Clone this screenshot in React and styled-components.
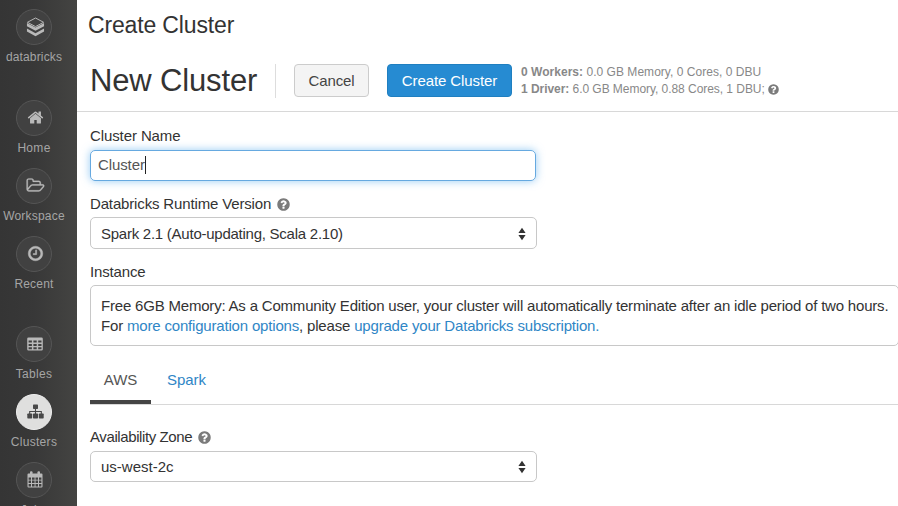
import React from "react";
import styled, { createGlobalStyle } from "styled-components";

const GlobalStyle = createGlobalStyle`
  * { box-sizing: border-box; }
  body { margin: 0; overflow: hidden; background: #fff; }
`;

const Page = styled.div`
  display: flex;
  width: 898px;
  height: 506px;
  overflow: hidden;
  background: #fff;
  color: #333;
  font: 15px/20px "Liberation Sans", Arial, sans-serif;
`;

const Sidebar = styled.nav`
  display: flex;
  flex-direction: column;
  flex: 0 0 77px;
  height: 506px;
  padding-top: 9px;
  overflow: hidden;
  background: linear-gradient(90deg, #353535 0%, #383838 45%, #444442 100%);
`;

const NavItem = styled.a`
  display: flex;
  flex-direction: column;
  flex: 0 0 68px;
  align-items: center;
  width: 68px;
  margin-top: ${(p) => p.$gap || 0}px;
  color: #a5a5a5;
`;

const NavCircle = styled.span`
  display: grid;
  place-items: center;
  width: 36px;
  height: 36px;
  padding: 0 0 1px 2px;
  border: 1px solid ${(p) => (p.$active ? "#eee" : "#555")};
  border-radius: 50%;
  background: ${(p) => (p.$active ? "#dfdfde" : "#414141")};
  color: ${(p) => (p.$active ? "#484848" : "#b9b9b9")};
`;

const NavLabel = styled.span`
  margin-top: 3px;
  font-size: 12px;
  line-height: 18px;
  letter-spacing: ${(p) => p.$track}px;
  white-space: nowrap;
`;

const Icon = styled.svg`
  display: block;
  flex: none;
  fill: currentColor;
`;

const Main = styled.main`
  flex: 1;
  min-width: 0;
`;

const PageTitle = styled.div`
  height: 50px;
  padding: 10px 0 0 11px;
  font-size: 23px;
  line-height: 30px;
  letter-spacing: -0.15px;
`;

const Toolbar = styled.header`
  display: flex;
  align-items: center;
  height: 62px;
  padding-left: 13px;
  border-bottom: 1px solid #d8d8d8;
`;

const Heading = styled.h1`
  width: 186px;
  height: 34px;
  margin: 0 18px 0 0;
  border-right: 1px solid #ddd;
  font-size: 31px;
  font-weight: 400;
  line-height: 34px;
  letter-spacing: -0.15px;
  white-space: nowrap;
`;

const Button = styled.button`
  width: ${(p) => p.$width}px;
  height: 33px;
  margin-right: 18px;
  padding: 0;
  border: 1px solid ${(p) => (p.$primary ? "#1f7fc0" : "#ccc")};
  border-radius: 4px;
  background: ${(p) => (p.$primary ? "#268bd2" : "#f4f4f4")};
  color: ${(p) => (p.$primary ? "#fff" : "#444")};
  font: 15px/31px "Liberation Sans", Arial, sans-serif;
  letter-spacing: -0.1px;
`;

const Summary = styled.div`
  margin-left: -9px;
  color: #888;
  font-size: 12px;
  line-height: 17px;
  white-space: nowrap;
`;

const SummaryRow = styled.div`
  display: flex;
  align-items: center;
  gap: 3px;
  letter-spacing: ${(p) => p.$track || 0}px;
`;

const Form = styled.form`
  padding: 14px 0 0 13px;
`;

const Label = styled.label`
  display: flex;
  align-items: center;
  gap: 6px;
  height: 20px;
  margin-top: ${(p) => p.$gap || 0}px;
  letter-spacing: ${(p) => p.$track || 0}px;
`;

const HelpIcon = styled(Icon)`
  color: #7b7b7b;
`;

const TextField = styled.div`
  display: flex;
  align-items: center;
  width: 446px;
  height: 31px;
  margin-top: 4px;
  padding: 0 7px 2px;
  border: 1px solid #66a9e0;
  border-radius: 5px;
  box-shadow: 0 0 8px rgba(82, 168, 236, 0.6);
  color: #555;
  letter-spacing: -0.1px;
`;

const Caret = styled.span`
  width: 1px;
  height: 18px;
  background: #222;
`;

const SelectBox = styled.div`
  display: flex;
  align-items: center;
  justify-content: space-between;
  width: 447px;
  height: ${(p) => p.$height || 32}px;
  margin-top: ${(p) => p.$gap || 3}px;
  padding: ${(p) => p.$drop || 0}px 10px 0;
  border: 1px solid #c8c8c8;
  border-radius: 5px;
  letter-spacing: ${(p) => p.$track || 0}px;
`;

const Notice = styled.div`
  width: 809px;
  height: 61px;
  margin-top: 3px;
  padding: 10px;
  border: 1px solid #c8c8c8;
  border-radius: 5px;
`;

const NoticeLine = styled.div`
  letter-spacing: ${(p) => p.$track || 0}px;
  white-space: nowrap;
`;

const Link = styled.a`
  color: #2f86c6;
`;

const Tabs = styled.div`
  display: flex;
  height: 59px;
  border-bottom: 1px solid #d8d8d8;
`;

const Tab = styled.div`
  width: ${(p) => p.$width}px;
  height: 58px;
  padding-top: 24px;
  border-bottom: ${(p) => (p.$active ? "4px solid #444" : "0")};
  color: ${(p) => (p.$active ? "#555" : "#2f86c6")};
  text-align: center;
`;

const BricksIcon = () => (
  <Icon width="19" height="20" viewBox="0 0 20 20" preserveAspectRatio="none">
    <path d="M1.500 5.300L10 1l8.500 4.300L10 9.600z" fill="none" stroke="currentColor" strokeWidth="1" />
    <path d="M1 6v3.200l9 4.500 9-4.500V6l-9 4.600zM1 11.600v3l9 4.600 9-4.600v-3l-9 4.600z" />
  </Icon>
);

const HomeIcon = () => (
  <Icon width="17" height="17" viewBox="0 0 1792 1792">
    <path d="M1472 992v480q0 26-19 45t-45 19h-384v-384h-256v384h-384q-26 0-45-19t-19-45v-480q0-1 .5-3t.5-3l575-474 575 474q1 2 1 6zm223-69l-62 74q-8 9-21 11h-3q-13 0-21-7l-692-577-692 577q-12 8-24 7-13-2-21-11l-62-74q-8-10-7-23.500t11-21.500l719-599q32-26 76-26t76 26l244 204v-195q0-14 9-23t23-9h192q14 0 23 9t9 23v408l219 182q10 8 11 21.500t-7 23.500z" />
  </Icon>
);

const FolderIcon = () => (
  <Icon width="19" height="17" viewBox="0 0 2048 1792">
    <path d="M1845 931q0-35-53-35h-1088q-40 0-85.500 21.500t-71.500 52.500l-294 363q-18 24-18 40 0 35 53 35h1088q40 0 86-22t71-53l294-363q18-22 18-39zm-1141-163h768v-160q0-40-28-68t-68-28h-576q-40 0-68-28t-28-68v-64q0-40-28-68t-68-28h-320q-40 0-68 28t-28 68v853l256-315q44-53 116-87.500t140-34.500zm1269 163q0 62-46 120l-295 363q-43 53-116 87.500t-140 34.500h-1088q-92 0-158-66t-66-158v-960q0-92 66-158t158-66h320q92 0 158 66t66 158v32h544q92 0 158 66t66 158v160h192q54 0 99 24.500t67 70.500q15 32 15 68z" stroke="currentColor" strokeWidth="30" />
  </Icon>
);

const ClockIcon = () => (
  <Icon width="17" height="17" viewBox="0 0 1792 1792">
    <path d="M1024 544v448q0 14-9 23t-23 9h-320q-14 0-23-9t-9-23v-64q0-14 9-23t23-9h224v-352q0-14 9-23t23-9h64q14 0 23 9t9 23zm416 352q0-148-73-273t-198-198-273-73-273 73-198 198-73 273 73 273 198 198 273 73 273-73 198-198 73-273zm224 0q0 209-103 385.500t-279.500 279.500-385.500 103-385.500-103-279.500-279.500-103-385.500 103-385.500 279.500-279.500 385.500-103 385.500 103 279.500 279.500 103 385.500z" stroke="currentColor" strokeWidth="40" />
  </Icon>
);

const TableIcon = () => (
  <Icon width="16" height="14" viewBox="0 0 16 14">
    <path
      fillRule="evenodd"
      d="M1.500.500h13a1.300 1.300 0 0 1 1.300 1.300v10.400a1.300 1.300 0 0 1-1.300 1.300h-13A1.300 1.300 0 0 1 .2 12.200V1.800A1.300 1.300 0 0 1 1.500.500zM1.600 3.500v2.100h3.300V3.500zm4.800 0v2.100h3.300V3.500zm4.800 0v2.100h3.300V3.500zM1.600 6.900v2h3.300v-2zm4.800 0v2h3.300v-2zm4.800 0v2h3.300v-2zM1.600 10.200v2h3.300v-2zm4.800 0v2h3.300v-2zm4.800 0v2h3.300v-2z"
    />
  </Icon>
);

const SitemapIcon = () => (
  <Icon width="17" height="15" viewBox="0 0 17 15">
    <rect x="6" y="0.500" width="5" height="4.500" rx="0.700" />
    <rect x="0.300" y="9.500" width="4.900" height="5" rx="0.700" />
    <rect x="6" y="9.500" width="5" height="5" rx="0.700" />
    <rect x="11.800" y="9.500" width="4.900" height="5" rx="0.700" />
    <path d="M8.500 5v5M2.700 10V7.500h11.600V10" fill="none" stroke="currentColor" strokeWidth="1.100" />
  </Icon>
);

const CalendarIcon = () => (
  <Icon width="16" height="17" viewBox="0 0 16 17">
    <path
      fillRule="evenodd"
      d="M1.500 2.500h13q1 0 1 1v12q0 1-1 1h-13q-1 0-1-1v-12q0-1 1-1zM1.600 6.500v2.200h2.400V6.500zm3.400 0v2.200h2.600V6.500zm3.500 0v2.200h2.500V6.500zm3.500 0v2.200h2.400V6.500zM1.600 9.600v2.300h2.400V9.600zm3.400 0v2.300h2.600V9.600zm3.500 0v2.300h2.500V9.600zm3.500 0v2.300h2.400V9.600zM1.600 12.900v2.500h2.400v-2.500zm3.400 0v2.500h2.600v-2.500zm3.500 0v2.500h2.500v-2.500zm3.500 0v2.500h2.400v-2.500z"
    />
    <rect x="3" y="0.300" width="2.500" height="4.200" rx="1" />
    <rect x="10.500" y="0.300" width="2.500" height="4.200" rx="1" />
  </Icon>
);

const Help = ({ size = 13 }) => (
  <HelpIcon width={size} height={size} viewBox="96 96 1600 1600">
    <path d="M1024 1376v-192q0-14-9-23t-23-9h-192q-14 0-23 9t-9 23v192q0 14 9 23t23 9h192q14 0 23-9t9-23zm256-672q0-88-55.500-163t-138.500-116-170-41q-243 0-371 213-15 24 8 42l132 100q7 6 19 6 16 0 25-12 53-68 86-92 34-24 86-24 48 0 85.500 26t37.500 59q0 38-20 61t-68 45q-63 28-115.500 86.500t-52.500 125.500v36q0 14 9 23t23 9h192q14 0 23-9t9-23q0-19 21.500-49.500t54.500-49.500q32-18 49-28.500t46-35 44.500-48 28-60.500 12.500-81zm384 192q0 209-103 385.500t-279.500 279.500-385.500 103-385.500-103-279.500-279.500-103-385.500 103-385.500 279.500-279.500 385.500-103 385.500 103 279.500 279.500 103 385.500z" />
  </HelpIcon>
);

const SortArrows = () => (
  <Icon width="8" height="14" viewBox="0 0 8 14">
    <path d="M4 .8L7.600 6H.4zM4 13.200L.4 8h7.200z" />
  </Icon>
);

const navItems = [
  { label: "databricks", icon: BricksIcon, track: 0.15 },
  { label: "Home", icon: HomeIcon, gap: 23, track: 0.3 },
  { label: "Workspace", icon: FolderIcon, track: 0.2 },
  { label: "Recent", icon: ClockIcon, track: 0.2 },
  { label: "Tables", icon: TableIcon, gap: 22, track: 0.3 },
  { label: "Clusters", icon: SitemapIcon, active: true, track: 0.3 },
  { label: "Jobs", icon: CalendarIcon, track: 0.3 },
];

export default function App() {
  return (
    <Page>
      <GlobalStyle />
      <Sidebar>
        {navItems.map(({ label, icon: Glyph, gap, active, track }) => (
          <NavItem key={label} $gap={gap}>
            <NavCircle $active={active}>
              <Glyph />
            </NavCircle>
            <NavLabel $track={track}>{label}</NavLabel>
          </NavItem>
        ))}
      </Sidebar>
      <Main>
        <PageTitle>Create Cluster</PageTitle>
        <Toolbar>
          <Heading>New Cluster</Heading>
          <Button $width={75}>Cancel</Button>
          <Button $width={125} $primary>Create Cluster</Button>
          <Summary>
            <SummaryRow $track={0.03}>
              <span><b>0 Workers:</b> 0.0 GB Memory, 0 Cores, 0 DBU</span>
            </SummaryRow>
            <SummaryRow $track={-0.05}>
              <span><b>1 Driver:</b> 6.0 GB Memory, 0.88 Cores, 1 DBU;</span>
              <Help size={11} />
            </SummaryRow>
          </Summary>
        </Toolbar>
        <Form>
          <Label $track={-0.1}>Cluster Name</Label>
          <TextField>Cluster<Caret /></TextField>
          <Label $gap={13} $track={-0.15}>Databricks Runtime Version <Help /></Label>
          <SelectBox $drop={1} $track={-0.25}>Spark 2.1 (Auto-updating, Scala 2.10)<SortArrows /></SelectBox>
          <Label $gap={13} $track={-0.15}>Instance</Label>
          <Notice>
            <NoticeLine $track={-0.195}>
              Free 6GB Memory: As a Community Edition user, your cluster will automatically terminate after an idle period of two hours.
            </NoticeLine>
            <NoticeLine $track={-0.18}>
              For <Link>more configuration options</Link>, please <Link>upgrade your Databricks subscription.</Link>
            </NoticeLine>
          </Notice>
          <Tabs>
            <Tab $active $width={61}>AWS</Tab>
            <Tab $width={71}>Spark</Tab>
          </Tabs>
          <Label $gap={22} $track={-0.4}>Availability Zone <Help /></Label>
          <SelectBox $gap={4} $height={31}>us-west-2c<SortArrows /></SelectBox>
        </Form>
      </Main>
    </Page>
  );
}
